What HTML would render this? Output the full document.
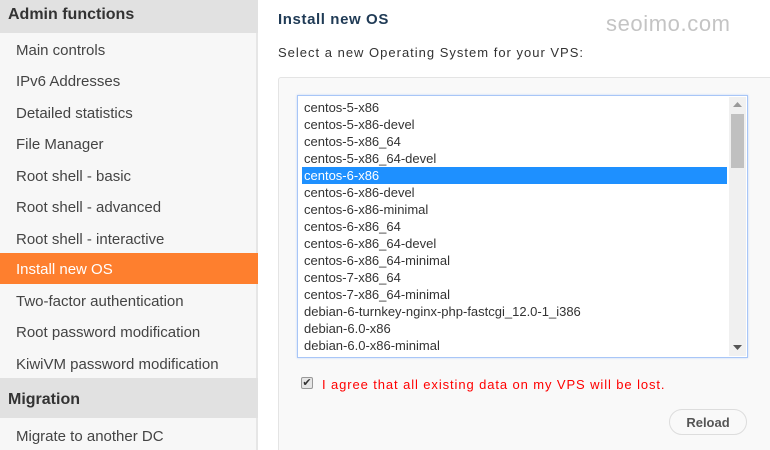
<!DOCTYPE html>
<html><head><meta charset="utf-8"><style>
*{margin:0;padding:0;box-sizing:border-box}
html,body{width:770px;height:450px;overflow:hidden}
body{background:#fff;font-family:"Liberation Sans",sans-serif;position:relative}
#side{position:absolute;left:0;top:0;width:258px;height:450px;background:#f7f7f7;border-right:2px solid #e6e6e6}
.h{position:absolute;left:0;width:258px;background:#e1e1e1;color:#333;font-weight:bold;font-size:16px;padding-left:8px}
.i{position:absolute;left:0;width:258px;height:31px;line-height:31px;padding-left:16px;font-size:15px;color:#444}
.a{background:#fe7f2e;color:#fff}
#title{position:absolute;left:278px;top:11px;font-size:15px;font-weight:bold;color:#1f3a55;letter-spacing:0.6px}
#wm{position:absolute;left:606px;top:11px;font-size:22px;color:#c4c4c4;letter-spacing:0.6px}
#sub{position:absolute;left:278px;top:45px;font-size:13px;color:#333;letter-spacing:1px}
#panel{position:absolute;left:278px;top:77px;width:500px;height:373px;background:#f9f9f9;border:1px solid #e4e4e4;border-bottom:none;border-radius:3px 3px 0 0}
#list{position:absolute;left:297px;top:95px;width:451px;height:263px;background:#fff;border:1px solid #a8c6f7;box-shadow:0 0 2px #c0d6fa}
.o{position:absolute;left:4px;width:425px;height:17px;line-height:17px;font-size:13px;color:#333;padding-left:2px}
.sel{background:#1e90ff;color:#fff}
#sb{position:absolute;right:1px;top:1px;width:17px;height:259px;background:#f0f0f0}
#thumb{position:absolute;left:2px;top:17px;width:13px;height:54px;background:#c0c0c0}
#cb{position:absolute;left:301px;top:377px;width:12px;height:12px;border:1px solid #999;border-radius:2px;background:#e6e6e6;font-size:11px;line-height:10px;text-align:center;color:#333}
#agree{position:absolute;left:322px;top:377px;font-size:13px;color:#f00;letter-spacing:0.9px}
#btn{position:absolute;left:669px;top:409px;width:78px;height:26px;border:1px solid #ddd;border-radius:13px;background:#f9f9f9;font-size:13px;font-weight:bold;color:#555;text-align:center;line-height:25px}
</style></head><body>
<div id="side">
<div class="h" style="top:0;height:33px;line-height:29px">Admin functions</div>
<div class="i" style="top:35px">Main controls</div>
<div class="i" style="top:66px">IPv6 Addresses</div>
<div class="i" style="top:98px">Detailed statistics</div>
<div class="i" style="top:129px">File Manager</div>
<div class="i" style="top:161px">Root shell - basic</div>
<div class="i" style="top:192px">Root shell - advanced</div>
<div class="i" style="top:224px">Root shell - interactive</div>
<div class="i a" style="top:253px;line-height:33px">Install new OS</div>
<div class="i" style="top:286px">Two-factor authentication</div>
<div class="i" style="top:317px">Root password modification</div>
<div class="i" style="top:349px">KiwiVM password modification</div>
<div class="h" style="top:378px;height:40px;line-height:44px">Migration</div>
<div class="i" style="top:421px">Migrate to another DC</div>
</div>
<div id="title">Install new OS</div>
<div id="wm">seoimo.com</div>
<div id="sub">Select a new Operating System for your VPS:</div>
<div id="panel"></div>
<div id="list">
<div class="o" style="top:3px">centos-5-x86</div>
<div class="o" style="top:20px">centos-5-x86-devel</div>
<div class="o" style="top:37px">centos-5-x86_64</div>
<div class="o" style="top:54px">centos-5-x86_64-devel</div>
<div class="o sel" style="top:71px">centos-6-x86</div>
<div class="o" style="top:88px">centos-6-x86-devel</div>
<div class="o" style="top:105px">centos-6-x86-minimal</div>
<div class="o" style="top:122px">centos-6-x86_64</div>
<div class="o" style="top:139px">centos-6-x86_64-devel</div>
<div class="o" style="top:156px">centos-6-x86_64-minimal</div>
<div class="o" style="top:173px">centos-7-x86_64</div>
<div class="o" style="top:190px">centos-7-x86_64-minimal</div>
<div class="o" style="top:207px">debian-6-turnkey-nginx-php-fastcgi_12.0-1_i386</div>
<div class="o" style="top:224px">debian-6.0-x86</div>
<div class="o" style="top:241px">debian-6.0-x86-minimal</div>
<div id="sb">
<svg style="position:absolute;left:4px;top:5px" width="9" height="6"><path d="M0 5L4.5 0L9 5Z" fill="#999"/></svg>
<div id="thumb"></div>
<svg style="position:absolute;left:4px;top:248px" width="9" height="6"><path d="M0 0L4.5 5L9 0Z" fill="#555"/></svg>
</div>
</div>
<div id="cb">✔</div>
<div id="agree">I agree that all existing data on my VPS will be lost.</div>
<div id="btn">Reload</div>
</body></html>
